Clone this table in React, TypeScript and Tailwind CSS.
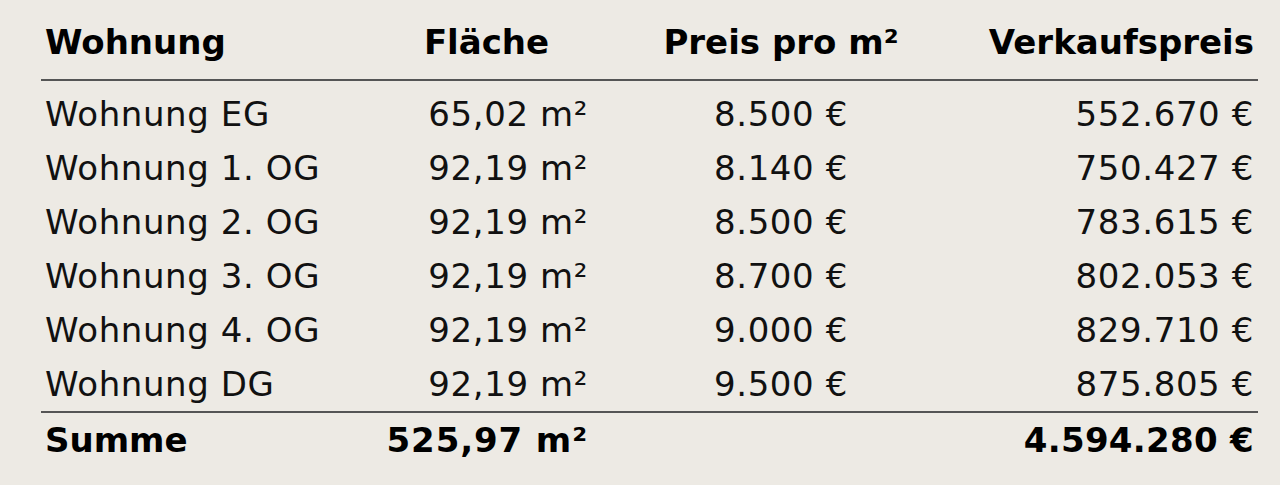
const rows = [
  { name: "Wohnung EG", area: "65,02 m²", ppm: "8.500 €", price: "552.670 €" },
  { name: "Wohnung 1. OG", area: "92,19 m²", ppm: "8.140 €", price: "750.427 €" },
  { name: "Wohnung 2. OG", area: "92,19 m²", ppm: "8.500 €", price: "783.615 €" },
  { name: "Wohnung 3. OG", area: "92,19 m²", ppm: "8.700 €", price: "802.053 €" },
  { name: "Wohnung 4. OG", area: "92,19 m²", ppm: "9.000 €", price: "829.710 €" },
  { name: "Wohnung DG", area: "92,19 m²", ppm: "9.500 €", price: "875.805 €" },
];

const cols = "grid grid-cols-[344px_205px_382px_286px]";

export default function App() {
  return (
    <div
      className="h-[485px] w-[1280px] overflow-hidden bg-[#edeae4] pl-[41px] text-[34px] leading-[40px] text-[#111]"
      style={{ fontFamily: '"DejaVu Sans", Verdana, sans-serif' }}
    >
      <div className="w-[1217px]">
        {/* Header */}
        <div className={`${cols} border-b-2 border-[#555] pt-[22px] pb-[17px] font-bold text-black`}>
          <div className="pl-[4px]">Wohnung</div>
          <div className="pr-[2px] text-center">Fläche</div>
          <div className="text-center">Preis pro m²</div>
          <div className="pr-[4px] text-right">Verkaufspreis</div>
        </div>

        {/* Body */}
        <div className="pt-[6px] tracking-[0.6px]">
          {rows.map((r) => (
            <div key={r.name} className={`${cols} h-[54px] items-center`}>
              <div className="pl-[4px]">{r.name}</div>
              <div className="pr-[2px] text-right">{r.area}</div>
              <div className="text-center">{r.ppm}</div>
              <div className="pr-[4px] text-right">{r.price}</div>
            </div>
          ))}
        </div>

        {/* Summe */}
        <div className={`${cols} h-[56px] items-center border-t-2 border-[#555] font-bold text-black`}>
          <div className="pl-[4px]">Summe</div>
          <div className="pr-[2px] text-right tracking-[0.9px]">525,97 m²</div>
          <div />
          <div className="pr-[4px] text-right tracking-[0.3px]">4.594.280 €</div>
        </div>
      </div>
    </div>
  );
}
